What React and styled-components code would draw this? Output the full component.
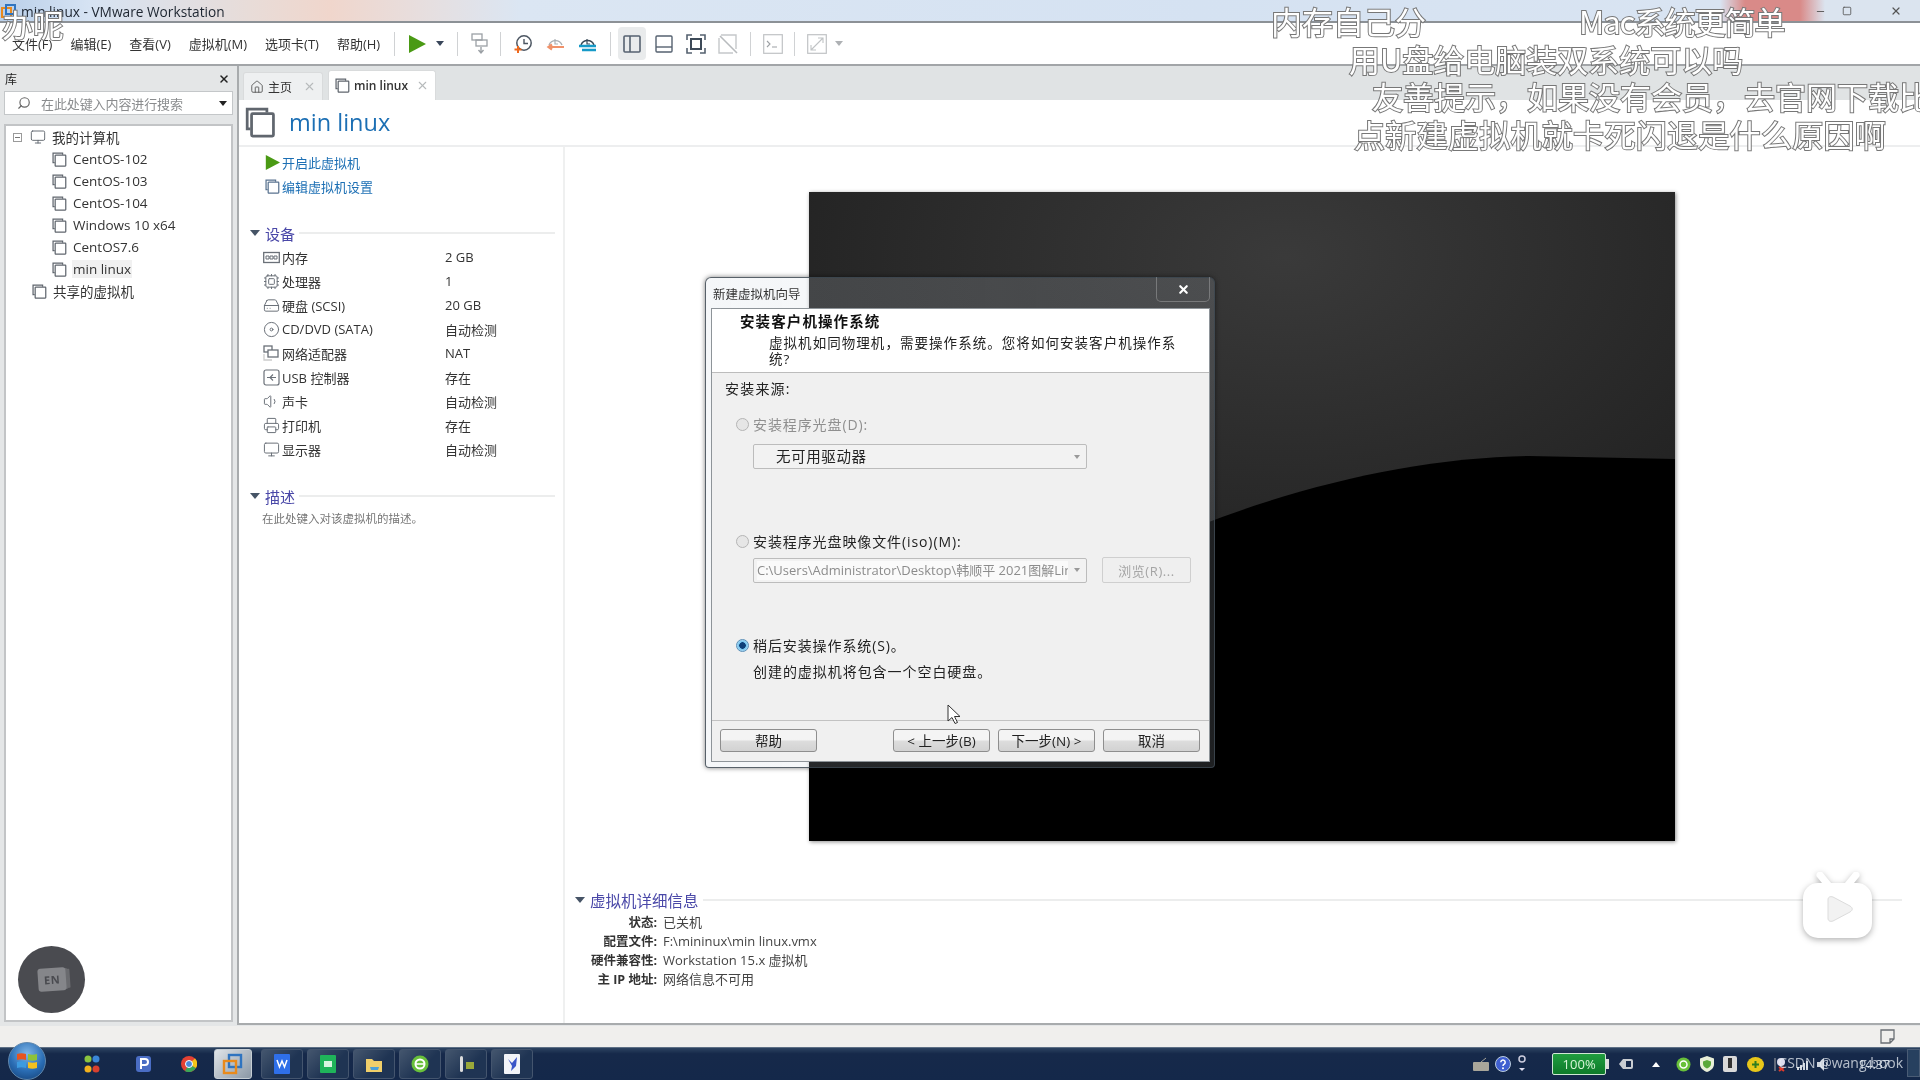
import React from "react";
import styled, { createGlobalStyle } from "styled-components";
import { Cpu, HardDrive, Disc, Volume1, Printer, Monitor, Search, Home, X, Minus, Square } from "lucide-react";

const Global = createGlobalStyle`
  html, body { margin: 0; padding: 0; background: #fff; overflow: hidden; }
  * { box-sizing: border-box; }
`;

const FONT = `"Open Sans","Noto Sans CJK SC",sans-serif`;

const Page = styled.div`
  position: relative; width: 1920px; height: 1080px; overflow: hidden;
  display: flex; flex-direction: column; font-family: ${FONT}; color: #222;
  font-size: 13px; background: #fff; filter: blur(0.45px);
`;
const TitleBar = styled.div`
  height: 23px; flex: none; display: flex; align-items: center; padding: 1px 0 0 1px; position: relative;
  background: linear-gradient(90deg, #b9cfe9 0, #d6e3f3 90px, #e8dcd8 250px, #f0d6cc 330px, #e6dfe0 430px, #dbe6f3 520px, #d5e2f2 1200px, #d9e4f2 1720px, #d98a88 1745px, #d98a88 1800px, #dbe4ef 1825px);
  border-bottom: 2px solid #8c9196;
`;
const TitleText = styled.span`font-size: 13.7px; margin-left: 5px; color: #1d2530;`;
const WinButtons = styled.div`
  margin-left: auto; display: flex; width: 105px; height: 21px; color: #555; align-items: center; gap: 16px;
  svg { display: block; }
`;
const Toolbar = styled.div`
  height: 43px; flex: none; display: flex; align-items: center; background: #fff; border-bottom: 2px solid #a2a5a8; padding-left: 12px;
`;
const MenuGroup = styled.div`display: flex; gap: 18px; font-size: 13px; color: #333;`;
const Sep = styled.div`width: 1px; height: 24px; background: #d0d2d4; flex: none; margin-left: ${p => p.$ml}px;`;
const Slot = styled.div`
  flex: none; margin-left: ${p => p.$ml}px; display: flex; align-items: center; justify-content: center;
  svg { display: block; }
`;
const Highlight = styled(Slot)`width: 28px; height: 33px; background: #e9ebec; border-radius: 4px;`;
const Caret = styled.div`
  flex: none; margin-left: ${p => p.$ml}px; width: 0; height: 0; border-left: 4px solid transparent; border-right: 4px solid transparent;
  border-top: 5px solid ${p => p.$color || "#39465a"};
`;
const Workspace = styled.div`flex: 1; min-height: 0; display: flex; background: #e4e6e7;`;
const Sidebar = styled.aside`width: 237px; flex: none; display: flex; flex-direction: column; padding: 0 4px 4px;`;
const LibHead = styled.div`height: 25px; display: flex; align-items: center; justify-content: space-between; font-size: 12px; padding: 0 3px 0 1px;`;
const SearchBox = styled.div`
  height: 24px; display: flex; align-items: center; background: #fff; border: 1px solid #c4c7c9; padding: 0 5px 0 12px; color: #666;
`;
const SearchText = styled.span`font-size: 13px; letter-spacing: -.1px; color: #8a8c8e; margin-left: 10px; flex: 1; white-space: nowrap;`;
const Tree = styled.div`margin-top: 9px; flex: 1; background: #fff; border: 2px solid #c2c4c6;`;
const TreeRow = styled.div`
  height: 22px; display: flex; align-items: center; padding-left: ${p => p.$indent}px; font-size: 13.5px; color: #333;
  svg { flex: none; }
`;
const TreeLabel = styled.span`margin-left: 5px; padding: 0 1px; background: ${p => (p.$sel ? "#f1f1f1" : "none")};`;
const Expander = styled.span`
  width: 9px; height: 9px; border: 1px solid #9a9a9a; margin-right: 8px; display: flex; align-items: center; justify-content: center;
  &::after { content: ""; width: 5px; height: 1px; background: #777; }
`;
const Main = styled.main`flex: 1; min-width: 0; display: flex; flex-direction: column; border-left: 2px solid #a8abad; border-bottom: 2px solid #a8abad; margin-bottom: 1px;`;
const TabStrip = styled.div`height: 34px; flex: none; display: flex; align-items: flex-end; gap: 5px; padding-left: 4px; background: #e0e3e4;`;
const Tab = styled.div`
  height: ${p => (p.$active ? 30 : 28)}px; width: ${p => p.$w}px; display: flex; align-items: center; padding: 0 6px; font-size: 12px;
  background: ${p => (p.$active ? "#fff" : "#eef0f1")}; border: 1px solid #d9dbdc; border-bottom: 0; border-radius: 3px 3px 0 0; gap: 4px;
  font-weight: ${p => (p.$active ? 600 : 400)}; color: #333;
`;
const TabClose = styled(X)`margin-left: auto; color: #b7babc;`;
const Heading = styled.div`height: 47px; flex: none; display: flex; align-items: center; padding-left: 6px; background: #fff; border-bottom: 2px solid #edeeef;`;
const HeadingText = styled.h1`margin: 0 0 0 13px; font-size: 23.5px; font-weight: 400; color: #1c6fb4; line-height: 1;`;
const Body = styled.div`flex: 1; min-height: 0; display: flex; background: #fff;`;
const LeftCol = styled.div`width: 326px; flex: none; border-right: 2px solid #eff0f0; padding: 3px 8px 0 9px;`;
const Action = styled.div`height: 24px; display: flex; align-items: center; padding-left: 17px; color: #1c6fb4; font-size: 13px; gap: 2px; svg { flex: none; }`;
const Section = styled.div`
  display: flex; align-items: center; height: 22px; margin-top: ${p => p.$mt}px; color: #4a48a8; font-size: ${p => p.$fs || 15}px; padding-left: ${p => p.$pl || 0}px;
  &::after { content: ""; flex: 1; height: 2px; background: #eceded; margin-left: 4px; }
`;
const SectionCaret = styled(Caret)`margin: 0 5px 0 0; border-left-width: 5px; border-right-width: 5px; border-top-width: 6px; border-top-color: #465466;`;
const DeviceList = styled.div`margin-top: 1px;`;
const DeviceRow = styled.div`
  height: 24px; display: grid; grid-template-columns: 19px 163px 1fr; align-items: center; padding-left: 15px; font-size: 13px; color: #333;
  svg { color: #6a7078; display: block; }
`;
const Hint = styled.div`font-size: 11.5px; color: #777; padding-left: 14px; margin-top: 3px;`;
const RightCol = styled.div`flex: 1; min-width: 0; display: flex; flex-direction: column; padding: 45px 0 0 0;`;
const Screen = styled.div`
  width: 866px; height: 649px; margin-left: 244px; flex: none; position: relative;
  background: radial-gradient(ellipse 60% 50% at 55% 10%, #3a3a3a 0, #232323 100%);
  box-shadow: 1px 1px 4px rgba(0,0,0,.45);
  svg { display: block; position: absolute; inset: 0; }
`;
const Details = styled.div`margin: 48px 18px 0 10px;`;
const DetailGrid = styled.div`
  display: grid; grid-template-columns: 82px 1fr; column-gap: 6px; font-size: 13px; line-height: 19px; margin-top: 2px;
`;
const DetailKey = styled.span`text-align: right; font-weight: 700; color: #333; white-space: nowrap; font-size: 12.5px;`;
const DetailVal = styled.span`color: #444;`;
const Strip = styled.div`height: 21px; flex: none; background: #f0efed; display: flex; align-items: center; justify-content: flex-end; padding-right: 25px;`;
const Taskbar = styled.footer`
  height: 33px; flex: none; display: flex; align-items: center; padding-left: 8px; color: #fff;
  background: linear-gradient(180deg, #2d4361 0, #16294a 18%, #14284a 100%); border-top: 1px solid #5d6f85;
`;
const Orb = styled.div`
  width: 38px; height: 38px; border-radius: 50%; flex: none; margin-top: -6px; display: flex; align-items: center; justify-content: center;
  background: radial-gradient(circle at 50% 30%, #7fb6e8 0, #2a6db4 55%, #123d74 100%); border: 1px solid #5f87ad;
`;
const Pinned = styled(Slot)`width: 20px; height: 22px;`;
const TaskBtn = styled.div`
  flex: none; width: ${p => p.$w || 42}px; height: 30px; margin-left: ${p => p.$ml}px; border-radius: 3px; display: flex; align-items: center; justify-content: center;
  border: 1px solid ${p => (p.$active ? "#c5cdd4" : "#44556e")};
  background: ${p => (p.$active ? "linear-gradient(135deg,#dfe4e8,#8a97a5)" : "linear-gradient(135deg,#44566e,#1f3453 60%)")};
`;
const Tray = styled.div`margin-left: auto; display: flex; align-items: center; height: 100%; position: relative; padding-right: 30px;`;
const TrayItem = styled(Slot)`svg { display: block; }`;
const BatteryBox = styled.div`
  width: 54px; height: 22px; margin-left: ${p => p.$ml}px; background: linear-gradient(#1f9d3f,#0e7a2a); border: 1px solid #cfe8d4; border-radius: 2px;
  font-size: 13px; color: #d8f5d8; text-align: center; line-height: 21px; flex: none; position: relative;
  &::after { content: ""; position: absolute; right: -4px; top: 5px; width: 3px; height: 10px; background: #ddd; }
`;
const Clock = styled.span`font-size: 12.5px; color: #c9d2de; margin-left: 28px;`;
const Watermark = styled.span`position: absolute; right: 17px; top: 5px; font-size: 14px; color: rgba(235,240,245,.75); white-space: nowrap;`;
const ShowDesk = styled.div`position: absolute; right: 0; top: 1px; width: 13px; height: 28px; border: 1px solid #4a5c75; background: #27405f;`;

const Subtitle = styled.div`
  position: absolute; left: ${p => p.$x}px; top: ${p => p.$y}px; font-size: 31px; line-height: 32px; white-space: nowrap; letter-spacing: ${p => p.$ls || 0}px;
  color: #fff; -webkit-text-stroke: 2px #777; paint-order: stroke fill; font-weight: 400; font-family: "Noto Sans CJK SC", sans-serif;
`;
const Circle = styled.div`
  position: absolute; left: 18px; top: 946px; width: 67px; height: 67px; border-radius: 50%; background: #4a4b50;
  display: flex; align-items: center; justify-content: center;
`;
const EnCard = styled.div`
  width: 28px; height: 23px; background: #85868a; color: #4a4b50; font-size: 11px; font-weight: 700; display: flex; align-items: center; justify-content: center;
  border-radius: 3px; transform: rotate(-4deg); box-shadow: 3px 0 0 -1px #6a6b6f, 6px 0 0 -2px #6a6b6f; letter-spacing: .5px;
`;
const TvLogo = styled.div`position: absolute; left: 1800px; top: 872px; filter: drop-shadow(0 2px 3px rgba(0,0,0,.3)); svg { display: block; }`;
const Cursor = styled.div`position: absolute; left: 947px; top: 704px; svg { display: block; }`;

const Dialog = styled.section`
  position: absolute; left: 705px; top: 277px; width: 510px; height: 491px; display: flex; flex-direction: column;
  border: 1px solid rgba(60,70,80,.85); border-radius: 6px 6px 4px 4px; padding: 0 4px 5px 5px;
  background: linear-gradient(90deg, rgba(205,215,225,.2), rgba(190,200,212,.16));
  box-shadow: 0 0 5px rgba(0,0,0,.5);
`;
const DlgTitleRow = styled.div`height: 30px; flex: none; display: flex; align-items: center; font-size: 12.5px; color: #333; position: relative; padding-left: 2px;`;
const DlgClose = styled.div`
  position: absolute; right: 0; top: -1px; width: 54px; height: 25px; border: 1px solid rgba(255,255,255,.25); border-top: 0; border-radius: 0 0 5px 5px;
  display: flex; align-items: center; justify-content: center; color: #fff; font-weight: 800; svg { display: block; }
`;
const DlgInner = styled.div`flex: 1; min-height: 0; display: flex; flex-direction: column; background: #f0f0f0; border: 1px solid #8e9499;`;
const DlgHeader = styled.header`height: 64px; flex: none; background: #fff; border-bottom: 1px solid #bcbcbc; padding: 3px 0 0 28px;`;
const DlgH = styled.h2`margin: 0; font-size: 14.5px; line-height: 20px; letter-spacing: 1.1px; font-weight: 700; color: #111;`;
const DlgSub = styled.p`margin: 3px 0 0 29px; width: 410px; font-size: 13.5px; line-height: 16px; letter-spacing: 1.05px; color: #222;`;
const DlgBody = styled.div`flex: 1; min-height: 0; padding: 6px 17px 0 13px; display: flex; flex-direction: column;`;
const SrcLabel = styled.div`font-size: 14px; line-height: 20px; letter-spacing: 1.2px; color: #222;`;
const RadioRow = styled.div`
  display: flex; align-items: center; height: 20px; margin-top: ${p => p.$mt}px; padding-left: 11px; gap: 4px; font-size: 14px; letter-spacing: .9px;
  color: ${p => (p.$off ? "#8f8f8f" : "#222")};
`;
const Radio = styled.span`
  width: 13px; height: 13px; border-radius: 50%; flex: none; border: 1px solid ${p => (p.$on ? "#5a8fb8" : "#b5b5b5")};
  background: ${p => (p.$on ? "radial-gradient(circle,#0f3f78 0 3px,#6fc1ee 3.5px,#e6f2fa 100%)" : "#e6e6e6")};
`;
const ComboRow = styled.div`display: flex; margin: ${p => p.$mt}px 0 0 28px; gap: 15px; align-items: center;`;
const Combo = styled.div`
  width: 334px; height: 25px; display: flex; align-items: center; border: 1px solid #bcbcbc; border-radius: 2px; background: #f2f2f2; padding: ${p => (p.$file ? "0 6px 0 3px" : "0 6px 0 22px")};
  font-size: ${p => (p.$file ? 13 : 14.5)}px; color: ${p => (p.$file ? "#8c8c8c" : "#222")}; white-space: nowrap; letter-spacing: ${p => (p.$file ? 0 : .6)}px; overflow: hidden;
`;
const ComboText = styled.span`flex: 1; min-width: 0; overflow: hidden; background: ${p => (p.$file ? "#fafafa" : "none")}; line-height: 19px;`;
const ComboCaret = styled(Caret)`margin: 0 0 0 6px; border-left-width: 3px; border-right-width: 3px; border-top-width: 4px; border-top-color: #999; flex: none;`;
const Browse = styled.div`
  width: 89px; height: 26px; border: 1px solid #cfcfcf; border-radius: 2px; background: #efefef; color: #a5a5a5; font-size: 13px; display: flex; align-items: center; justify-content: center; letter-spacing: .6px;
`;
const Plain = styled.div`margin: 7px 0 0 28px; font-size: 14px; line-height: 20px; letter-spacing: .95px; color: #222;`;
const DlgFooter = styled.footer`height: 41px; flex: none; border-top: 1px solid #c2c2c2; display: flex; align-items: center; padding: 0 0 2px 8px; gap: 8px;`;
const Btn = styled.div`
  width: 97px; height: 23px; border: 1px solid #8e8e8e; border-radius: 3px; margin-left: ${p => p.$ml || 0}px;
  background: linear-gradient(#f4f4f4 0 45%, #dcdcdc 55%, #d2d2d2 100%); font-size: 13.5px; color: #222; display: flex; align-items: center; justify-content: center; white-space: nowrap;
`;

const VmIcon = ({ s = 17, c = "#60666e", w = 1.4 }) => (
  <svg width={s} height={s} viewBox="0 0 17 17" fill="none" stroke={c} strokeWidth={w}>
    <path d="M12 3V1.2H1.2V12H3" />
    <rect x="3.6" y="3.6" width="12" height="12.4" rx=".6" />
  </svg>
);

const Net = () => (
  <svg width="17" height="17" viewBox="0 0 17 17" fill="none" stroke="currentColor" strokeWidth="1.3">
    <rect x="1" y="1" width="8" height="6" /><rect x="5" y="5" width="10" height="7" fill="#fff" /><path d="M1 9v6h8" stroke="#ccc" />
  </svg>
);
const Mem = () => (
  <svg width="17" height="17" viewBox="0 0 17 17" fill="none" stroke="currentColor" strokeWidth="1.3">
    <rect x=".7" y="3.500" width="15.600" height="10" /><path d="M3 7h3v3H3zM7 7h3v3H7zM11 7h3v3h-3z" strokeWidth="1" />
  </svg>
);
const UsbBox = () => (
  <svg width="17" height="17" viewBox="0 0 17 17" fill="none" stroke="currentColor" strokeWidth="1.2">
    <rect x="1" y="1" width="15" height="15" rx="2" /><path d="M4 8.500h9M10 5.500l-3 3 3 3M13 8.500" strokeWidth="1.1" />
  </svg>
);

const PlayIcon = ({ s = 18 }) => (
  <svg width={s} height={s} viewBox="0 0 18 18"><path d="M1 0 18 9 1 18Z" fill="#4a9a14" /></svg>
);

const devices = [
  [<Mem />, "内存", "2 GB"],
  [<Cpu size={17} strokeWidth={1.4} />, "处理器", "1"],
  [<HardDrive size={17} strokeWidth={1.4} />, "硬盘 (SCSI)", "20 GB"],
  [<Disc size={17} strokeWidth={1.4} />, "CD/DVD (SATA)", "自动检测"],
  [<Net />, "网络适配器", "NAT"],
  [<UsbBox />, "USB 控制器", "存在"],
  [<Volume1 size={17} strokeWidth={1.4} />, "声卡", "自动检测"],
  [<Printer size={17} strokeWidth={1.4} />, "打印机", "存在"],
  [<Monitor size={17} strokeWidth={1.4} />, "显示器", "自动检测"],
];

const vms = ["CentOS-102", "CentOS-103", "CentOS-104", "Windows 10 x64", "CentOS7.6", "min linux"];

const details = [
  ["状态:", "已关机"],
  ["配置文件:", "F:\\mininux\\min linux.vmx"],
  ["硬件兼容性:", "Workstation 15.x 虚拟机"],
  ["主 IP 地址:", "网络信息不可用"],
];

const subs = [
  ["办呢", 2, 8, 0],
  ["内存自己分", 1271, 5, 0],
  ["Mac系统更简单", 1579, 5, -1],
  ["用U盘给电脑装双系统可以吗", 1349, 43, 0],
  ["友善提示，如果没有会员，去官网下载比", 1372, 80, 0],
  ["点新建虚拟机就卡死闪退是什么原因啊", 1354, 118, 0.3],
];

const ToolIcon = ({ w = 18, h = 18, children }) => (
  <svg width={w} height={h} viewBox={`0 0 ${w} ${h}`} fill="none">{children}</svg>
);

export default function App() {
  return (
    <Page>
      <Global />
      <TitleBar>
        <svg width="15" height="15" viewBox="0 0 15 15" fill="none"><rect x="1" y="4" width="9" height="9" stroke="#e98a1c" strokeWidth="2" /><rect x="5" y="1" width="9" height="9" stroke="#2f74c0" strokeWidth="2" /></svg>
        <TitleText>min linux - VMware Workstation</TitleText>
        <WinButtons>
          <Minus size={11} strokeWidth={2} />
          <Square size={10} strokeWidth={2} />
          <X size={12} strokeWidth={2.4} style={{ marginLeft: 22 }} />
        </WinButtons>
      </TitleBar>
      <Toolbar>
        <MenuGroup>
          <span>文件(F)</span><span>编辑(E)</span><span>查看(V)</span><span>虚拟机(M)</span><span>选项卡(T)</span><span>帮助(H)</span>
        </MenuGroup>
        <Sep $ml={14} />
        <Slot $ml={13}><PlayIcon /></Slot>
        <Caret $ml={10} />
        <Sep $ml={13} />
        <Slot $ml={12}>
          <ToolIcon h={22}><rect x="2" y="1" width="10" height="6" stroke="#9ba0a5" strokeWidth="1.3" /><rect x="6" y="7" width="11" height="6" stroke="#9ba0a5" strokeWidth="1.3" /><path d="M11 14v5M8.5 17l2.5 3 2.5-3" stroke="#9ba0a5" strokeWidth="1.4" /></ToolIcon>
        </Slot>
        <Sep $ml={12} />
        <Slot $ml={13}>
          <ToolIcon h={20}><circle cx="10" cy="9" r="7.2" stroke="#4c5662" strokeWidth="1.5" /><path d="M10 5v4.5h4" stroke="#4c5662" strokeWidth="1.4" /><path d="M4 12v7M.5 15.5h7" stroke="#ef6a1e" strokeWidth="2" /></ToolIcon>
        </Slot>
        <Slot $ml={14}>
          <ToolIcon h={20}><path d="M3 11a7 7 0 0 1 13 0" stroke="#aab0b5" strokeWidth="1.4" /><path d="M9 5v5h3" stroke="#aab0b5" strokeWidth="1.2" /><path d="M18 13H3M6 10.5 2.5 13 6 15.5" stroke="#f0926a" strokeWidth="2.2" /></ToolIcon>
        </Slot>
        <Slot $ml={14}>
          <ToolIcon h={20}><path d="M3 11a7 7 0 0 1 13 0" stroke="#3a4a58" strokeWidth="1.5" /><path d="M9 5v5h3" stroke="#3a4a58" strokeWidth="1.2" /><path d="M1 12h17M4 16h14" stroke="#169ac8" strokeWidth="2.4" /></ToolIcon>
        </Slot>
        <Sep $ml={14} />
        <Highlight $ml={7}>
          <ToolIcon h={18}><rect x="1" y="1" width="16" height="16" rx="1" stroke="#566270" strokeWidth="1.6" /><path d="M7 1v16" stroke="#566270" strokeWidth="1.6" /></ToolIcon>
        </Highlight>
        <Slot $ml={9}>
          <ToolIcon h={18}><rect x="1" y="1" width="16" height="16" rx="1" stroke="#566270" strokeWidth="1.4" /><path d="M1 12h16" stroke="#566270" strokeWidth="1.4" /></ToolIcon>
        </Slot>
        <Slot $ml={13}>
          <ToolIcon w={20} h={20}><path d="M1 6V1h5M14 1h5v5M19 14v5h-5M6 19H1v-5" stroke="#566270" strokeWidth="1.6" /><rect x="5" y="5" width="10" height="10" stroke="#3e4a58" strokeWidth="2" /></ToolIcon>
        </Slot>
        <Slot $ml={12}>
          <ToolIcon w={20} h={20}><path d="M3 1h15v14M1 4v15h14" stroke="#c5c8ca" strokeWidth="1.4" /><path d="M2 2l17 17" stroke="#b8bbbe" strokeWidth="1.6" /></ToolIcon>
        </Slot>
        <Sep $ml={12} />
        <Slot $ml={12}>
          <ToolIcon w={20} h={20}><rect x=".7" y=".7" width="18.6" height="18.6" stroke="#c0c3c5" strokeWidth="1.2" /><path d="M4 7l3 3-3 3M9 13h5" stroke="#9ca0a4" strokeWidth="1.1" /></ToolIcon>
        </Slot>
        <Sep $ml={11} />
        <Slot $ml={12}>
          <ToolIcon w={20} h={20}><rect x=".7" y=".7" width="18.6" height="18.6" stroke="#c0c3c5" strokeWidth="1.2" /><path d="M4 16 16 4M11 4h5v5M4 11v5h5" stroke="#c0c3c5" strokeWidth="1.1" /></ToolIcon>
        </Slot>
        <Caret $ml={8} $color="#aeb1b4" />
      </Toolbar>
      <Workspace>
        <Sidebar>
          <LibHead>库<X size={12} strokeWidth={3} color="#222" /></LibHead>
          <SearchBox>
            <Search size={14} style={{ transform: "scaleX(-1)" }} />
            <SearchText>在此处键入内容进行搜索</SearchText>
            <Caret $color="#222" />
          </SearchBox>
          <Tree>
            <TreeRow $indent={7}><Expander /><Monitor size={16} strokeWidth={1.4} color="#60666e" /><TreeLabel>我的计算机</TreeLabel></TreeRow>
            {vms.map((v, i) => (
              <TreeRow key={v} $indent={46}><VmIcon s={15} /><TreeLabel $sel={i === 5}>{v}</TreeLabel></TreeRow>
            ))}
            <TreeRow $indent={26}><VmIcon s={15} /><TreeLabel>共享的虚拟机</TreeLabel></TreeRow>
            <Circle><EnCard>EN</EnCard></Circle>
          </Tree>
        </Sidebar>
        <Main>
          <TabStrip>
            <Tab $w={80}><Home size={14} strokeWidth={1.5} color="#555" />主页<TabClose size={13} /></Tab>
            <Tab $w={108} $active><VmIcon s={15} />min linux<TabClose size={13} /></Tab>
          </TabStrip>
          <Heading>
            <VmIcon s={31} w={1.5} />
            <HeadingText>min linux</HeadingText>
          </Heading>
          <Body>
            <LeftCol>
              <Action><PlayIcon s={15} />开启此虚拟机</Action>
              <Action><VmIcon s={15} c="#5a7390" />编辑虚拟机设置</Action>
              <Section $mt={24} $pl={2}><SectionCaret />设备</Section>
              <DeviceList>
                {devices.map(([ic, k, v]) => (
                  <DeviceRow key={k}>{ic}<span>{k}</span><span>{v}</span></DeviceRow>
                ))}
              </DeviceList>
              <Section $mt={24} $pl={2}><SectionCaret />描述</Section>
              <Hint>在此处键入对该虚拟机的描述。</Hint>
            </LeftCol>
            <RightCol>
              <Screen>
                <svg width="866" height="649" viewBox="0 0 866 649"><path d="M0 560C200 400 470 268 720 264L866 267V649H0Z" fill="#000" /></svg>
              </Screen>
              <Details>
                <Section $mt={0} $fs={15.5}><SectionCaret />虚拟机详细信息</Section>
                <DetailGrid>
                  {details.map(([k, v]) => (
                    <React.Fragment key={k}><DetailKey>{k}</DetailKey><DetailVal>{v}</DetailVal></React.Fragment>
                  ))}
                </DetailGrid>
              </Details>
            </RightCol>
          </Body>
        </Main>
      </Workspace>
      <Strip>
        <svg width="15" height="15" viewBox="0 0 15 15" fill="none" stroke="#6a6f74" strokeWidth="1.3"><path d="M1 1h13v9l-4 4H1zM14 10h-4v4" /></svg>
      </Strip>
      <Taskbar>
        <Orb>
          <svg width="22" height="20" viewBox="0 0 22 20"><path d="M1 3c3-1 6-1 9 0v6C7 8 4 8 1 9z" fill="#e8541f" /><path d="M12 3c3 1 6 1 9 0v6c-3 1-6 1-9 0z" fill="#8fc33a" /><path d="M1 11c3-1 6-1 9 0v6c-3-1-6-1-9 0z" fill="#3d9be0" /><path d="M12 11c3 1 6 1 9 0v6c-3 1-6 1-9 0z" fill="#f4c01e" /></svg>
        </Orb>
        <Pinned $ml={36}>
          <svg width="18" height="20" viewBox="0 0 18 20"><circle cx="5" cy="5" r="3.5" fill="#8bc43f" /><circle cx="13" cy="5" r="3.5" fill="#3a86d8" /><circle cx="5" cy="15" r="3.5" fill="#f2b11d" /><circle cx="13" cy="15" r="3.5" fill="#d8402f" /></svg>
        </Pinned>
        <Pinned $ml={31}>
          <svg width="15" height="16" viewBox="0 0 15 16"><rect width="15" height="16" rx="3" fill="#4a6dc4" /><path d="M5 13V3h4a3 3 0 0 1 0 6H5" stroke="#fff" strokeWidth="2" fill="none" /></svg>
        </Pinned>
        <Pinned $ml={26}>
          <svg width="16" height="16" viewBox="0 0 16 16"><circle cx="8" cy="8" r="8" fill="#e34133" /><path d="M8 8 15 12A8 8 0 0 1 4 15z" fill="#3aa757" /><path d="M8 8 15 12A8 8 0 0 0 14 2.500z" fill="#f5c518" /><circle cx="8" cy="8" r="3.5" fill="#4a89dc" stroke="#fff" /></svg>
        </Pinned>
        <TaskBtn $active $w={38} $ml={15}>
          <svg width="22" height="22" viewBox="0 0 22 22" fill="none"><rect x="7" y="2" width="12" height="12" stroke="#2f74c0" strokeWidth="2.4" /><rect x="2" y="8" width="12" height="12" stroke="#e98a1c" strokeWidth="2.4" /></svg>
        </TaskBtn>
        <TaskBtn $ml={9}><svg width="16" height="20" viewBox="0 0 16 20"><rect width="16" height="20" rx="1" fill="#2f6fe8" /><path d="M3 6l2.500 7L8 7l2.500 6L13 6" stroke="#fff" strokeWidth="1.5" fill="none" /></svg></TaskBtn>
        <TaskBtn $ml={4}><svg width="16" height="18" viewBox="0 0 16 18"><rect width="16" height="18" rx="1" fill="#1fb45a" /><path d="M4 6h8v6H4z" fill="#d8f5e0" /></svg></TaskBtn>
        <TaskBtn $ml={4}><svg width="18" height="18" viewBox="0 0 18 18"><path d="M1 4h6l2 2h8v11H1z" fill="#f0cf6a" /><path d="M5 12h9l-1 3H6z" fill="#4aa0d8" /></svg></TaskBtn>
        <TaskBtn $ml={4}><svg width="18" height="18" viewBox="0 0 18 18"><circle cx="9" cy="9" r="8.500" fill="#68c03a" /><circle cx="9" cy="9" r="4.500" fill="none" stroke="#fff" strokeWidth="2" /><path d="M4.500 9h9" stroke="#fff" strokeWidth="1.500" /></svg></TaskBtn>
        <TaskBtn $ml={4}><svg width="18" height="20" viewBox="0 0 18 20"><rect x="3" y="2" width="3" height="16" rx="1.500" fill="#ddd" /><rect x="9" y="8" width="8" height="7" fill="#9aa83a" /></svg></TaskBtn>
        <TaskBtn $ml={4}><svg width="16" height="20" viewBox="0 0 16 20"><rect width="16" height="20" rx="1" fill="#f2f4f8" /><path d="M4 5l4 4 5-6-1 9-5 5 1-5z" fill="#3a55c8" /></svg></TaskBtn>
        <Tray>
          <TrayItem $ml={0}><svg width="16" height="14" viewBox="0 0 16 14"><rect y="5" width="16" height="9" rx="1" fill="#a9a69a" /><path d="M8 5 13 1" stroke="#a9a69a" /></svg></TrayItem>
          <TrayItem $ml={6}><svg width="16" height="16" viewBox="0 0 16 16"><circle cx="8" cy="8" r="7.500" fill="#3f5fd0" stroke="#bcd" /><path d="M5.800 6.200a2.200 2.200 0 1 1 3.400 1.900c-.8.500-1.200 1-1.200 1.900" fill="none" stroke="#fff" strokeWidth="1.500" /><circle cx="8" cy="12.300" r="1" fill="#fff" /></svg></TrayItem>
          <TrayItem $ml={6}><svg width="10" height="18" viewBox="0 0 10 18"><circle cx="5" cy="4" r="3" fill="none" stroke="#ccd" strokeWidth="1.500" /><path d="M2 13h6l-3 3z" fill="#dde" /></svg></TrayItem>
          <BatteryBox $ml={25}>100%</BatteryBox>
          <TrayItem $ml={12}><svg width="17" height="12" viewBox="0 0 17 12"><path d="M5 1h8a2 2 0 0 1 2 2v6a2 2 0 0 1-2 2H5L1 6z" fill="#c9cdd2" /><rect x="8" y="3" width="5" height="6" fill="#16294a" /></svg></TrayItem>
          <TrayItem $ml={17}><svg width="8" height="5" viewBox="0 0 8 5"><path d="M0 5 4 0l4 5z" fill="#fff" /></svg></TrayItem>
          <TrayItem $ml={16}><svg width="15" height="15" viewBox="0 0 15 15"><circle cx="7.500" cy="7.500" r="7" fill="#68c03a" /><circle cx="7.500" cy="7.500" r="3.500" fill="none" stroke="#fff" strokeWidth="1.500" /></svg></TrayItem>
          <TrayItem $ml={9}><svg width="14" height="16" viewBox="0 0 14 16"><path d="M7 0 14 2.500V8c0 4-3 6.500-7 8-4-1.500-7-4-7-8V2.500z" fill="#e9efd8" /><path d="M7 4l4 1.500V8c0 2-2 3.500-4 4.500C5 11.500 3 10 3 8V5.500z" fill="#5aa83a" /></svg></TrayItem>
          <TrayItem $ml={9}><svg width="14" height="16" viewBox="0 0 14 16"><rect width="14" height="16" rx="2" fill="#d9d9d9" /><rect x="5" y="2" width="4" height="10" fill="#333" /></svg></TrayItem>
          <TrayItem $ml={10}><svg width="17" height="15" viewBox="0 0 17 15"><ellipse cx="8.500" cy="7.500" rx="8.500" ry="7.500" fill="#e8c71a" /><path d="M8.500 4v7M5 7.500h7" stroke="#2f7d1f" strokeWidth="2" /></svg></TrayItem>
          <TrayItem $ml={9}><svg width="16" height="16" viewBox="0 0 16 16"><path d="M2 2v13" stroke="#aaa" /><circle cx="8" cy="6" r="4" fill="#dde" /><path d="M6 11l5 4M11 11l-5 4" stroke="#e03a2a" strokeWidth="2" /></svg></TrayItem>
          <TrayItem $ml={8}><svg width="14" height="12" viewBox="0 0 14 12" fill="#cfd6de"><rect y="9" width="2" height="3" /><rect x="3" y="7" width="2" height="5" /><rect x="6" y="5" width="2" height="7" /><rect x="9" y="3" width="2" height="9" /></svg></TrayItem>
          <TrayItem $ml={6}><svg width="13" height="13" viewBox="0 0 13 13"><path d="M0 4h3l4-4v13L3 9H0z" fill="#cfd6de" /><path d="M9 4a4 4 0 0 1 0 5" stroke="#cfd6de" fill="none" /></svg></TrayItem>
          <Clock>14:37</Clock>
          <Watermark>CSDN @wang.book</Watermark>
          <ShowDesk />
        </Tray>
      </Taskbar>

      <Dialog>
        <DlgTitleRow>
          新建虚拟机向导
          <DlgClose><X size={13} strokeWidth={4} /></DlgClose>
        </DlgTitleRow>
        <DlgInner>
          <DlgHeader>
            <DlgH>安装客户机操作系统</DlgH>
            <DlgSub>虚拟机如同物理机，需要操作系统。您将如何安装客户机操作系统?</DlgSub>
          </DlgHeader>
          <DlgBody>
            <SrcLabel>安装来源:</SrcLabel>
            <RadioRow $mt={15} $off><Radio />安装程序光盘(D):</RadioRow>
            <ComboRow $mt={10}>
              <Combo><ComboText>无可用驱动器</ComboText><ComboCaret /></Combo>
            </ComboRow>
            <RadioRow $mt={62}><Radio />安装程序光盘映像文件(iso)(M):</RadioRow>
            <ComboRow $mt={6}>
              <Combo $file><ComboText $file>C:\Users\Administrator\Desktop\韩顺平 2021图解Linux</ComboText><ComboCaret /></Combo>
              <Browse>浏览(R)...</Browse>
            </ComboRow>
            <RadioRow $mt={52}><Radio $on />稍后安装操作系统(S)。</RadioRow>
            <Plain>创建的虚拟机将包含一个空白硬盘。</Plain>
          </DlgBody>
          <DlgFooter>
            <Btn>帮助</Btn>
            <Btn $ml={68}>&lt; 上一步(B)</Btn>
            <Btn>下一步(N) &gt;</Btn>
            <Btn>取消</Btn>
          </DlgFooter>
        </DlgInner>
      </Dialog>

      <Cursor>
        <svg width="15" height="21" viewBox="0 0 15 21"><path d="M1 1v16l4-3.500 3 6 2.500-1-3-6h5.500z" fill="#fff" stroke="#333" strokeWidth="1" /></svg>
      </Cursor>
      <TvLogo>
        <svg width="76" height="68" viewBox="0 0 76 68"><path d="M20 3 29 14M56 3 47 14" stroke="#fff" strokeWidth="7" strokeLinecap="round" /><rect x="3" y="11" width="69" height="55" rx="15" fill="#fff" /><path d="M28 28c0-3 2-4 5-3l17 9c3 2 3 4 0 6l-17 9c-3 1-5 0-5-3z" fill="#f2f2f2" stroke="#dcdcdc" /></svg>
      </TvLogo>
      {subs.map(([t, x, y, ls]) => <Subtitle key={t} $x={x} $y={y} $ls={ls}>{t}</Subtitle>)}
    </Page>
  );
}
